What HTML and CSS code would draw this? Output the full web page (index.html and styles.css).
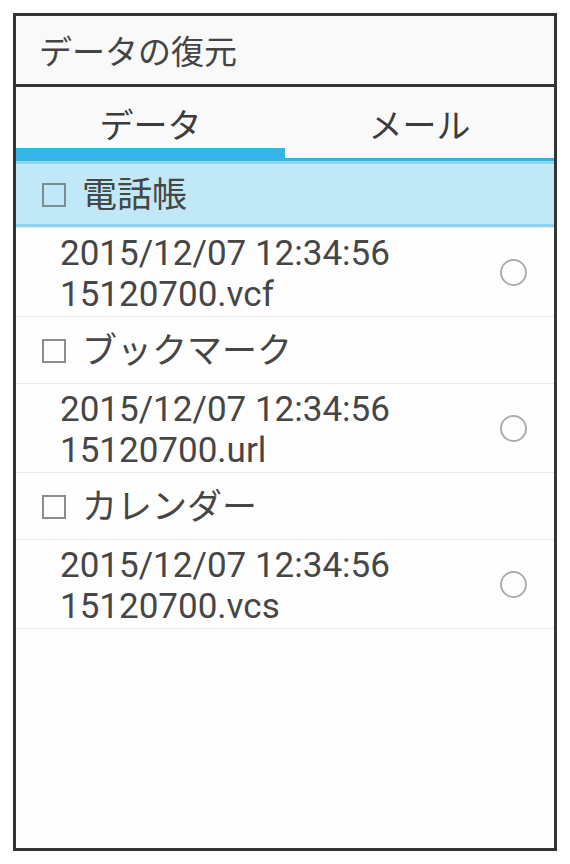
FILE: index.html
```html
<!DOCTYPE html>
<html lang="ja">
<head>
<meta charset="utf-8">
<title>データの復元</title>
<link rel="stylesheet" href="styles.css">
</head>
<body>
<div class="frame">
  <div class="title">データの復元</div>
  <div class="tabs">
    <div class="tab active">データ</div>
    <div class="tab">メール</div>
  </div>
  <div class="list">
    <div class="group selected"><span class="check"></span><span class="label">電話帳</span></div>
    <div class="item">
      <div class="lines"><div>2015/12/07 12:34:56</div><div>15120700.vcf</div></div>
      <span class="radio"></span>
    </div>
    <div class="group"><span class="check"></span><span class="label">ブックマーク</span></div>
    <div class="item">
      <div class="lines"><div>2015/12/07 12:34:56</div><div>15120700.url</div></div>
      <span class="radio"></span>
    </div>
    <div class="group"><span class="check"></span><span class="label">カレンダー</span></div>
    <div class="item">
      <div class="lines"><div>2015/12/07 12:34:56</div><div>15120700.vcs</div></div>
      <span class="radio"></span>
    </div>
  </div>
</div>
</body>
</html>
```
FILE: styles.css
```css
* { box-sizing: border-box; }
html, body { margin: 0; padding: 0; background: #ffffff; }
body {
  font-family: Roboto, "Noto Sans CJK JP", sans-serif;
  color: #464646;
}
.frame {
  margin: 13px 0 0 13px;
  width: 544px;
  height: 838px;
  border: 3px solid #343434;
  background: #fefefe;
  display: flex;
  flex-direction: column;
}
.title {
  height: 71px;
  border-bottom: 3px solid #343434;
  background: #f9f9f9;
  display: flex;
  align-items: center;
  padding-left: 23px;
  font-size: 33px;
  color: #444;
}
.tabs {
  height: 74px;
  display: flex;
  background: #fafafa;
  border-bottom: 3px solid #35b5e5;
}
.tab {
  flex: 1;
  display: flex;
  align-items: center;
  justify-content: center;
  font-size: 34px;
  color: #3c3c3c;
  position: relative;
  padding-top: 1px;
}
.tab.active::after {
  content: "";
  position: absolute;
  left: 0;
  right: 0;
  bottom: 0;
  height: 10px;
  background: #35b5e5;
}
.list { display: flex; flex-direction: column; }
.group {
  height: 67px;
  display: flex;
  align-items: center;
  padding-left: 26px;
  padding-top: 2px;
  border-bottom: 1px solid #e6e6e6;
  font-size: 35px;
}
.group.selected {
  background: #c1e8f6;
  box-shadow: inset 0 3px 0 #8dd4ef, inset 0 -3px 0 #8dd4ef;
}
.check {
  width: 24px;
  height: 24px;
  border: 2px solid #8c8c8c;
  margin-right: 16px;
  flex: none;
}
.group.selected .check { border-color: #7d8c92; }
.label { line-height: 1; }
.item {
  height: 89px;
  display: flex;
  align-items: center;
  justify-content: space-between;
  padding: 5px 27px 1px 44px;
  border-bottom: 1px solid #e6e6e6;
  font-size: 35px;
  line-height: 41px;
}
.radio {
  width: 27px;
  height: 27px;
  border: 2px solid #adadad;
  border-radius: 50%;
  flex: none;
  margin-top: -4px;
}
```
